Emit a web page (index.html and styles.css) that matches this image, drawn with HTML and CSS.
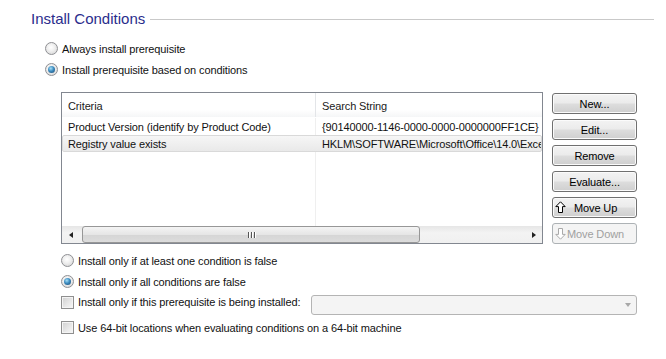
FILE: index.html
```html
<!DOCTYPE html>
<html>
<head>
<meta charset="utf-8">
<link rel="stylesheet" href="styles.css">
</head>
<body>
<div class="page">
  <div class="group-head">
    <span class="group-title">Install Conditions</span>
    <span class="group-rule"></span>
  </div>

  <div class="opts opts-top">
    <div class="opt"><span class="radio"></span><span>Always install prerequisite</span></div>
    <div class="opt"><span class="radio on"></span><span>Install prerequisite based on conditions</span></div>
  </div>

  <div class="grid-area">
    <div class="listview">
      <div class="lv-head">
        <div class="c1">Criteria</div>
        <div class="c2">Search String</div>
      </div>
      <div class="lv-body">
        <div class="lv-row">
          <div class="c1">Product Version (identify by Product Code)</div>
          <div class="c2">{90140000-1146-0000-0000-0000000FF1CE}</div>
        </div>
        <div class="lv-row sel">
          <div class="c1">Registry value exists</div>
          <div class="c2">HKLM\SOFTWARE\Microsoft\Office\14.0\Exce</div>
        </div>
        <div class="lv-fill">
          <div class="c1"></div>
          <div class="c2"></div>
        </div>
      </div>
      <div class="hscroll">
        <div class="sb-arrow"><span class="tri-left"></span></div>
        <div class="sb-track">
          <div class="sb-thumb"><span class="grip"><i></i><i></i><i></i></span></div>
        </div>
        <div class="sb-arrow"><span class="tri-right"></span></div>
      </div>
    </div>

    <div class="buttons">
      <div class="btn">New...</div>
      <div class="btn">Edit...</div>
      <div class="btn">Remove</div>
      <div class="btn">Evaluate...</div>
      <div class="btn btn-icon">
        <svg class="arrow" width="11" height="13" viewBox="0 0 11 13"><path d="M5.5 0.8 L10.2 5.6 H7.5 V11.5 H3.5 V5.6 H0.8 Z" fill="#fff" stroke="#000" stroke-width="1" stroke-linejoin="miter"/></svg>
        <span>Move Up</span>
      </div>
      <div class="btn btn-icon disabled">
        <svg class="arrow" width="11" height="13" viewBox="0 0 11 13"><path d="M5.5 12.2 L10.2 7.4 H7.5 V1.5 H3.5 V7.4 H0.8 Z" fill="#fff" stroke="#a9a9a9" stroke-width="1"/></svg>
        <span class="tight">Move Down</span>
      </div>
    </div>
  </div>

  <div class="opts opts-bottom">
    <div class="opt"><span class="radio"></span><span>Install only if at least one condition is false</span></div>
    <div class="opt"><span class="radio on"></span><span>Install only if all conditions are false</span></div>
    <div class="opt opt-combo"><span class="check"></span><span class="combo-label">Install only if this prerequisite is being installed:</span>
      <div class="combo"><span class="combo-arrow"></span></div>
    </div>
    <div class="opt opt-last"><span class="check"></span><span>Use 64-bit locations when evaluating conditions on a 64-bit machine</span></div>
  </div>
</div>
</body>
</html>
```

FILE: styles.css
```css
* { box-sizing: border-box; }

html, body {
  margin: 0;
  padding: 0;
  background: #fff;
}

body {
  width: 666px;
  height: 359px;
  overflow: hidden;
  font-family: "Liberation Sans", Arial, sans-serif;
  font-size: 11px;
  letter-spacing: -0.12px;
  color: #111;
}

.page {
  padding-top: 10px;
}

/* group header */
.group-head {
  display: flex;
  align-items: center;
  height: 18px;
  padding-left: 31px;
  width: 654px;
}
.group-title {
  font-size: 15px;
  letter-spacing: 0;
  color: #2a2d8c;
  line-height: 18px;
  white-space: nowrap;
}
.group-rule {
  flex: 1;
  height: 1px;
  background: #c9c9c9;
  margin-left: 5px;
  margin-top: 1px;
}

/* options */
.opts {
  display: flex;
  flex-direction: column;
}
.opts-top {
  padding-left: 45px;
  margin-top: 10px;
}
.opt {
  display: flex;
  align-items: center;
  height: 21px;
  gap: 4px;
  white-space: nowrap;
}

.radio {
  width: 13px;
  height: 13px;
  border-radius: 50%;
  border: 1px solid #8f9094;
  background: radial-gradient(circle at 45% 40%, #ffffff 0%, #f0f0f0 40%, #cfcfcf 100%);
  flex: none;
  position: relative;
}
.radio.on::after {
  content: "";
  position: absolute;
  left: 2px;
  top: 2px;
  width: 7px;
  height: 7px;
  border-radius: 50%;
  background: radial-gradient(circle at 40% 35%, #a7e0f7 0%, #3d8cc0 45%, #17436b 100%);
}

.check {
  width: 13px;
  height: 13px;
  border: 1px solid #8f8f8f;
  background: linear-gradient(135deg, #cfcfcf 0%, #e9e9e9 60%, #f8f8f8 100%);
  box-shadow: inset 0 0 0 1px #f4f4f4;
  flex: none;
}

/* grid area */
.grid-area {
  display: flex;
  align-items: flex-start;
  gap: 9px;
  margin-top: 12px;
  padding-left: 61px;
}

.listview {
  width: 482px;
  height: 152px;
  border: 1px solid #828790;
  display: flex;
  flex-direction: column;
  overflow: hidden;
  background: #fff;
}

.c1 {
  width: 253px;
  flex: none;
  padding-left: 6px;
  white-space: nowrap;
  overflow: hidden;
}
.c2 {
  flex: 1;
  padding-left: 6px;
  white-space: nowrap;
  overflow: hidden;
  border-left: 1px solid #efefef;
}

.lv-head {
  display: flex;
  height: 24px;
  align-items: stretch;
  background: linear-gradient(#ffffff 0%, #ffffff 70%, #f5f6f7 100%);
  color: #1b1b1b;
}
.lv-head .c1, .lv-head .c2 {
  padding-top: 7px;
}
.lv-head .c2 {
  border-left: 1px solid #e3e5e8;
}

.lv-body {
  flex: 1;
  display: flex;
  flex-direction: column;
}
.lv-row {
  display: flex;
  height: 17px;
  align-items: center;
  flex: none;
}
.lv-row .c1, .lv-row .c2 {
  height: 100%;
  display: flex;
  align-items: center;
}
.lv-row:first-child {
  margin-top: 1px;
}
.lv-row.sel {
  background: linear-gradient(#f6f6f6, #e9e9e9);
  border: 1px solid #d9d9d9;
  border-radius: 2px;
}
.lv-row.sel .c1 { width: 252px; padding-left: 5px; }
.lv-row.sel .c2 { border-left-color: transparent; }
.lv-fill {
  flex: 1;
  display: flex;
}

/* horizontal scrollbar */
.hscroll {
  display: flex;
  height: 17px;
  flex: none;
  background: linear-gradient(#e6e6e6, #f3f3f3 40%, #f0f0f0);
}
.sb-arrow {
  width: 17px;
  display: flex;
  align-items: center;
  justify-content: center;
  flex: none;
}
.tri-left {
  width: 0; height: 0;
  border-top: 3.5px solid transparent;
  border-bottom: 3.5px solid transparent;
  border-right: 4px solid #222;
}
.tri-right {
  width: 0; height: 0;
  border-top: 3.5px solid transparent;
  border-bottom: 3.5px solid transparent;
  border-left: 4px solid #222;
}
.sb-track {
  flex: 1;
  display: flex;
  padding: 0 0 0 3px;
}
.sb-thumb {
  width: 338px;
  height: 17px;
  border: 1px solid #979797;
  border-radius: 3px;
  background: linear-gradient(#f4f4f4 0%, #e6e6e6 50%, #d6d6d6 55%, #dcdcdc 100%);
  display: flex;
  align-items: center;
  justify-content: center;
}
.grip {
  display: flex;
  gap: 2px;
}
.grip i {
  display: block;
  width: 1px;
  height: 6px;
  background: #555;
  box-shadow: 1px 0 0 #fff;
}

/* buttons */
.buttons {
  display: flex;
  flex-direction: column;
  gap: 5px;
  margin-top: 1px;
}
.btn {
  width: 85px;
  height: 21px;
  border: 1px solid #707070;
  border-radius: 3px;
  background: linear-gradient(#f3f3f3 0%, #ebebeb 48%, #dddddd 52%, #cfcfcf 100%);
  box-shadow: inset 0 0 0 1px #fbfbfb;
  display: flex;
  align-items: center;
  justify-content: center;
  color: #000;
  white-space: nowrap;
}
.btn-icon {
  justify-content: flex-start;
  padding-left: 2px;
  gap: 8px;
}
.btn-icon .arrow { flex: none; }
.btn.disabled {
  border-color: #adb2b5;
  background: #f4f4f4;
  box-shadow: none;
  color: #a0a0a0;
  gap: 1px;
}

/* bottom options */
.opts-bottom {
  padding-left: 61px;
  margin-top: 6px;
  width: 637px;
}
.opt-combo {
  height: 25px;
  align-items: flex-start;
}
.opt-combo .check {
  margin-top: 4px;
}
.combo-label {
  margin-top: 4px;
  line-height: 13px;
}
.combo {
  flex: 1;
  height: 20px;
  margin-top: 3px;
  margin-left: 7px;
  border: 1px solid #b4b4b4;
  border-radius: 3px;
  background: #f4f4f4;
  display: flex;
  align-items: center;
  justify-content: flex-end;
  padding-right: 5px;
}
.combo-arrow {
  width: 0; height: 0;
  border-left: 3.5px solid transparent;
  border-right: 3.5px solid transparent;
  border-top: 4px solid #a8a8a8;
}
.opt-last {
  height: 21px;
}
```
